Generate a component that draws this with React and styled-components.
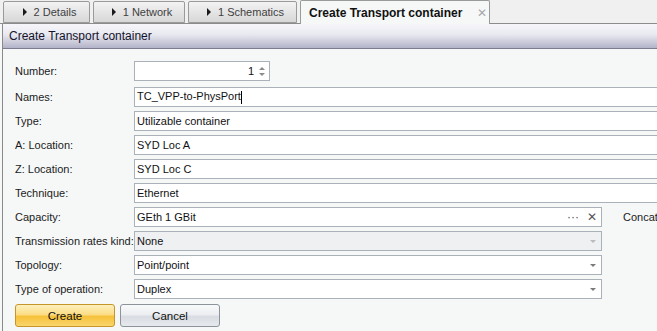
import React from 'react';
import styled, { createGlobalStyle } from 'styled-components';

const GlobalStyle = createGlobalStyle`
  html, body {
    margin: 0;
    padding: 0;
    background: #f6f8f8;
    overflow: hidden;
  }
  body {
    font-family: "Liberation Sans", Arial, sans-serif;
    font-size: 11px;
    color: #1b1b1b;
  }
`;

const Page = styled.div`
  width: 657px;
  height: 331px;
  overflow: hidden;
  display: flex;
  flex-direction: column;
  background: #f6f8f8;
`;

const TabStrip = styled.div`
  display: flex;
  align-items: flex-end;
  gap: 3px;
  height: 24px;
  padding-left: 3px;
  background: #f0f0f0;
  border-bottom: 1px solid #8c8c8c;
  box-sizing: border-box;
`;

const Tab = styled.div`
  display: flex;
  align-items: center;
  justify-content: ${p => (p.active ? 'flex-start' : 'center')};
  gap: ${p => (p.active ? '15px' : '7px')};
  box-sizing: border-box;
  width: ${p => p.width}px;
  height: ${p => (p.active ? '24px' : '22px')};
  margin-bottom: ${p => (p.active ? '-1px' : '0')};
  padding: ${p => (p.active ? '0 0 0 8px' : '0 0 0 6px')};
  border: 1px solid #9a9a9a;
  border-bottom: ${p => (p.active ? 'none' : '1px solid #9a9a9a')};
  border-radius: 2px 2px 0 0;
  background: ${p => (p.active ? '#f6f8f8' : 'linear-gradient(#f3f3f3, #d7d7d7)')};
  font-size: ${p => (p.active ? '12px' : '11px')};
  font-weight: ${p => (p.active ? 700 : 400)};
  color: ${p => (p.active ? '#111' : '#404040')};
  white-space: nowrap;
`;

const Arrow = styled.span`
  width: 0;
  height: 0;
  border-top: 4px solid transparent;
  border-bottom: 4px solid transparent;
  border-left: 4px solid #1a1a1a;
`;

const CloseX = styled.span`
  color: #a8a8a8;
  font-size: 12px;
  font-weight: 400;
`;

const Panel = styled.div`
  flex: 1;
  margin-left: 2px;
  border-left: 1px solid #8a8a8a;
  display: flex;
  flex-direction: column;
`;

const Header = styled.div`
  height: 24px;
  display: flex;
  align-items: center;
  padding-left: 6px;
  background: linear-gradient(#f6f6fa 0%, #e8e8f0 45%, #b3b3c9 100%);
  border-bottom: 1px solid #7c7c90;
  font-size: 12px;
  color: #14142a;
`;

const Form = styled.div`
  display: grid;
  grid-template-columns: 119px 1fr;
  row-gap: 4px;
  padding: 12px 0 0 12px;
  align-items: center;
`;

const Label = styled.div`
  height: 20px;
  line-height: 20px;
  white-space: nowrap;
  margin-bottom: ${p => (p.spaced ? '2px' : '0')};
`;

const RowEnd = styled.div`
  display: flex;
  align-items: center;
  gap: 21px;
  white-space: nowrap;
  overflow: hidden;
`;

const Field = styled.div`
  flex: none;
  box-sizing: border-box;
  height: 20px;
  width: ${p => p.width}px;
  display: flex;
  align-items: center;
  padding: 0 4px 0 2px;
  margin-bottom: ${p => (p.spaced ? '2px' : '0')};
  border: 1px solid #abb1b8;
  background: ${p => (p.disabled ? '#eef0f1' : '#fff')};
  justify-content: ${p => (p.right ? 'flex-end' : 'flex-start')};
  color: #111;
`;

const Value = styled.span`
  flex: ${p => (p.right ? '0 0 auto' : 1)};
  white-space: nowrap;
`;

const Caret = styled.span`
  display: inline-block;
  width: 1px;
  height: 13px;
  background: #000;
  vertical-align: middle;
`;

const Spin = styled.div`
  display: flex;
  flex-direction: column;
  gap: 3px;
  margin-left: 5px;
  span {
    width: 0;
    height: 0;
    border-left: 3px solid transparent;
    border-right: 3px solid transparent;
  }
  span:first-child { border-bottom: 3px solid #8a8a8a; }
  span:last-child { border-top: 3px solid #8a8a8a; }
`;

const DropArrow = styled.span`
  width: 0;
  height: 0;
  border-left: 3px solid transparent;
  border-right: 3px solid transparent;
  border-top: 3px solid ${p => (p.disabled ? '#b8bcc0' : '#7a7a7a')};
  margin-right: 1px;
`;

const Tools = styled.span`
  display: flex;
  align-items: center;
  gap: 8px;
  color: #555;
  font-size: 12px;
`;

const Buttons = styled.div`
  display: flex;
  gap: 5px;
  padding: 5px 0 0 12px;
`;

const Button = styled.button`
  width: 100px;
  height: 23px;
  font-family: inherit;
  font-size: 11.5px;
  color: #111;
  border-radius: 3px;
  border: 1px solid ${p => (p.primary ? '#c6962a' : '#8c939b')};
  background: ${p =>
    p.primary
      ? 'linear-gradient(#fdf0bd 0%, #fbdd86 45%, #f6c23a 55%, #f9d56c 100%)'
      : 'linear-gradient(#f8f9fa 0%, #eceef1 45%, #d9dde3 55%, #e6e9ed 100%)'};
  padding: 0;
`;

const tabs = [
  { label: '2 Details', width: 87 },
  { label: '1 Network', width: 92 },
  { label: '1 Schematics', width: 109 },
];

export default function App() {
  return (
    <Page>
      <GlobalStyle />
      <TabStrip>
        {tabs.map(t => (
          <Tab key={t.label} width={t.width}>
            <Arrow />
            {t.label}
          </Tab>
        ))}
        <Tab active width={190}>
          Create Transport container
          <CloseX>✕</CloseX>
        </Tab>
      </TabStrip>
      <Panel>
        <Header>Create Transport container</Header>
        <Form>
          <Label spaced>Number:</Label>
          <Field width={136} right spaced>
            <Value right>1</Value>
            <Spin><span /><span /></Spin>
          </Field>

          <Label>Names:</Label>
          <Field width={560}>
            <Value>TC_VPP-to-PhysPort<Caret /></Value>
          </Field>

          <Label>Type:</Label>
          <Field width={560}><Value>Utilizable container</Value></Field>

          <Label>A: Location:</Label>
          <Field width={560}><Value>SYD Loc A</Value></Field>

          <Label>Z: Location:</Label>
          <Field width={560}><Value>SYD Loc C</Value></Field>

          <Label>Technique:</Label>
          <Field width={560}><Value>Ethernet</Value></Field>

          <Label>Capacity:</Label>
          <RowEnd>
            <Field width={468}>
              <Value>GEth 1 GBit</Value>
              <Tools><span>···</span><span>✕</span></Tools>
            </Field>
            Concatenation
          </RowEnd>

          <Label>Transmission rates kind:</Label>
          <Field width={468} disabled>
            <Value>None</Value>
            <DropArrow disabled />
          </Field>

          <Label>Topology:</Label>
          <Field width={468}>
            <Value>Point/point</Value>
            <DropArrow />
          </Field>

          <Label>Type of operation:</Label>
          <Field width={468}>
            <Value>Duplex</Value>
            <DropArrow />
          </Field>
        </Form>
        <Buttons>
          <Button primary>Create</Button>
          <Button>Cancel</Button>
        </Buttons>
      </Panel>
    </Page>
  );
}
